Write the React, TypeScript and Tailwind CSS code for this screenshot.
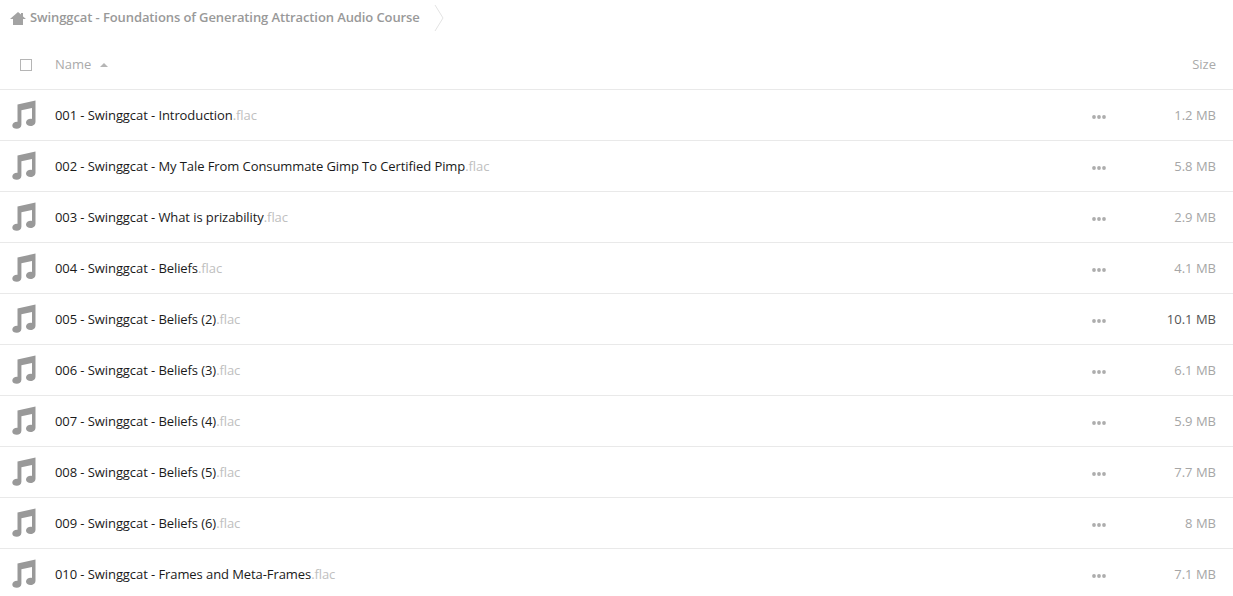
const files = [
  { name: "001 - Swinggcat - Introduction", size: "1.2 MB" },
  { name: "002 - Swinggcat - My Tale From Consummate Gimp To Certified Pimp", size: "5.8 MB" },
  { name: "003 - Swinggcat - What is prizability", size: "2.9 MB" },
  { name: "004 - Swinggcat - Beliefs", size: "4.1 MB" },
  { name: "005 - Swinggcat - Beliefs (2)", size: "10.1 MB", big: true },
  { name: "006 - Swinggcat - Beliefs (3)", size: "6.1 MB" },
  { name: "007 - Swinggcat - Beliefs (4)", size: "5.9 MB" },
  { name: "008 - Swinggcat - Beliefs (5)", size: "7.7 MB" },
  { name: "009 - Swinggcat - Beliefs (6)", size: "8 MB" },
  { name: "010 - Swinggcat - Frames and Meta-Frames", size: "7.1 MB" },
];

const HomeIcon = () => (
  <svg width="16" height="13" viewBox="0 0 16 13" className="shrink-0">
    <path d="M8 0 L11 2.6 V1 H13 V4.4 L16 7 H13 V13 H3 V7 H0 Z" fill="#a3a3a3" />
  </svg>
);

const NoteIcon = () => (
  <svg width="24" height="29" viewBox="0 0 24 29" className="shrink-0">
    <path
      d="M5.5 4.4 L23.5 0.6 V21.5 C23.5 24.3 21.3 26 18.6 26 C16 26 14 24.6 14 22.5 C14 20.3 16.2 18.8 18.7 18.8 C19.4 18.8 19.8 18.9 20 19.1 V8 L9.4 10.2 V24.8 C9.4 27.3 7.2 28.8 4.8 28.8 C2.2 28.8 0.3 27.6 0.3 25.5 C0.3 23.3 2.5 21.8 5 21.8 C5.3 21.8 5.5 21.9 5.5 22.1 Z"
      fill="#999999"
    />
  </svg>
);

const Dots = () => (
  <svg width="14" height="4" viewBox="0 0 14 4" className="mt-[2px] shrink-0">
    <circle cx="2" cy="2" r="1.9" fill="#adadad" />
    <circle cx="7" cy="2" r="1.9" fill="#adadad" />
    <circle cx="12" cy="2" r="1.9" fill="#adadad" />
  </svg>
);

export default function App() {
  return (
    <div className="h-[596px] overflow-hidden bg-white font-['Open_Sans',sans-serif] text-[13px]">
      {/* Breadcrumb */}
      <div className="flex h-[36px] items-center pl-[10px]">
        <HomeIcon />
        <span className="ml-[4px] font-semibold tracking-[-0.1px] text-[#999999]">
          Swinggcat - Foundations of Generating Attraction Audio Course
        </span>
        <svg width="10" height="26" viewBox="0 0 10 26" className="ml-[14px]">
          <path d="M1 0 L9 13 L1 26" fill="none" stroke="#e3e3e3" />
        </svg>
      </div>

      {/* Header */}
      <div className="flex h-[54px] items-center border-b border-[#e9e9e9] pt-[4px] pr-[17px]">
        <div className="ml-[20px] h-[12px] w-[12px] border border-[#b5b5b5]" />
        <span className="ml-[23px] text-[#aaaaaa]">Name</span>
        <span className="ml-[9px] h-0 w-0 border-x-[4px] border-b-[4px] border-x-transparent border-b-[#b5b5b5]" />
        <span className="ml-auto text-[#aaaaaa]">Size</span>
      </div>

      {/* File rows */}
      {files.map((f) => (
        <div key={f.name} className="flex h-[51px] items-center border-b border-[#e9e9e9] pt-[2px] pr-[17px]">
          <div className="mb-[4px] ml-[12px] flex w-[43px]">
            <NoteIcon />
          </div>
          <span className="tracking-[-0.08px] text-[#1a1a1a]">
            {f.name}
            <span className="text-[#c0c0c0]">.flac</span>
          </span>
          <div className="ml-auto flex items-center">
            <Dots />
            <span className={f.big ? "w-[110px] text-right text-[#555555]" : "w-[110px] text-right text-[#a6a6a6]"}>
              {f.size}
            </span>
          </div>
        </div>
      ))}
    </div>
  );
}
